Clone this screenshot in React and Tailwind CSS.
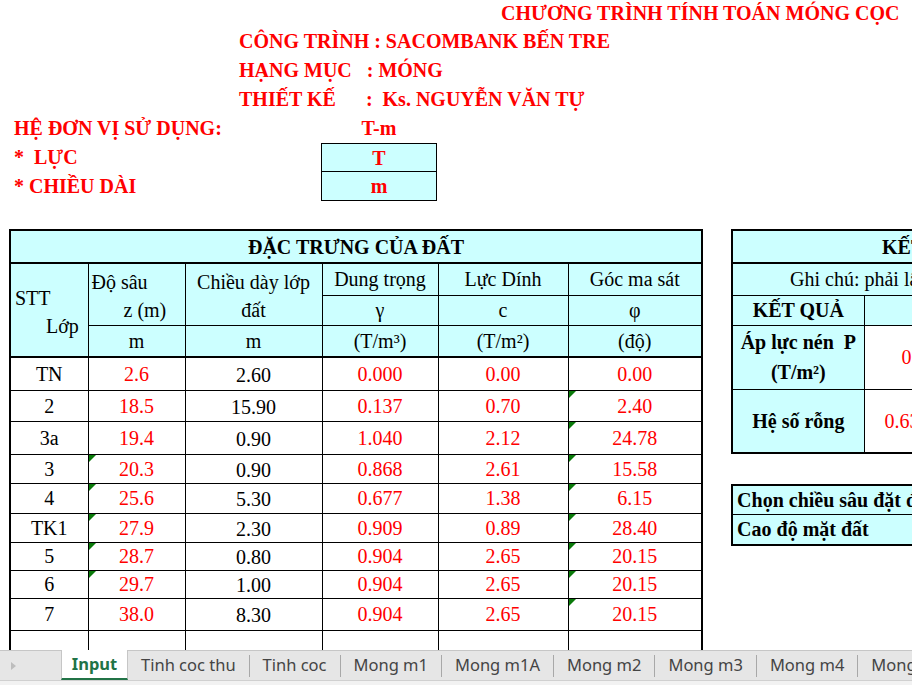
import React from 'react';

const RED = 'text-[#ff0000]';

const soilRows = [
  { stt: 'TN', z: '2.6', d: '2.60', g: '0.000', c: '0.00', phi: '0.00', h: 'h-[33px]', zt: false, pt: false },
  { stt: '2', z: '18.5', d: '15.90', g: '0.137', c: '0.70', phi: '2.40', h: 'h-[31px]', zt: false, pt: true },
  { stt: '3a', z: '19.4', d: '0.90', g: '1.040', c: '2.12', phi: '24.78', h: 'h-[33px]', zt: false, pt: true },
  { stt: '3', z: '20.3', d: '0.90', g: '0.868', c: '2.61', phi: '15.58', h: 'h-[29px]', zt: true, pt: true },
  { stt: '4', z: '25.6', d: '5.30', g: '0.677', c: '1.38', phi: '6.15', h: 'h-[30px]', zt: true, pt: true },
  { stt: 'TK1', z: '27.9', d: '2.30', g: '0.909', c: '0.89', phi: '28.40', h: 'h-[29px]', zt: true, pt: true },
  { stt: '5', z: '28.7', d: '0.80', g: '0.904', c: '2.65', phi: '20.15', h: 'h-[28px]', zt: true, pt: true },
  { stt: '6', z: '29.7', d: '1.00', g: '0.904', c: '2.65', phi: '20.15', h: 'h-[28px]', zt: true, pt: true },
  { stt: '7', z: '38.0', d: '8.30', g: '0.904', c: '2.65', phi: '20.15', h: 'h-[32px]', zt: false, pt: true },
];

const tabs = ['Tinh coc thu', 'Tinh coc', 'Mong m1', 'Mong m1A', 'Mong m2', 'Mong m3', 'Mong m4', 'Mong m5'];

// little green comment marker in the corner of a cell
const Marker = () => (
  <span className="absolute left-0 top-0 w-0 h-0 border-t-[7px] border-r-[7px] border-t-[#0a7a0a] border-r-transparent" />
);

const SoilTable = () => {
  const cell = 'border border-black p-0 text-center';
  const head = `${cell} bg-[#ccffff]`;
  return (
    <table className="border-collapse table-fixed w-[692px] border-2 border-black text-[20px] leading-[28px]">
      <colgroup>
        <col className="w-[78px]" />
        <col className="w-[97px]" />
        <col className="w-[137px]" />
        <col className="w-[116px]" />
        <col className="w-[130px]" />
        <col className="w-[134px]" />
      </colgroup>
      <tbody>
        <tr className="h-[33px]">
          <td colSpan={6} className={`${head} border-b-2 font-bold`}>ĐẶC TRƯNG CỦA ĐẤT</td>
        </tr>
        <tr className="h-[32px]">
          <td rowSpan={3} className={`${head} border-b-2 align-top text-left`}>
            <div className="pt-[20px] pl-[4px]">STT</div>
            <div className="pl-[35px]">Lớp</div>
          </td>
          <td rowSpan={2} className={`${head} align-top text-left`}>
            <div className="pt-[4px] pl-[3px]">Độ sâu</div>
            <div className="pl-[35px]">z (m)</div>
          </td>
          <td rowSpan={2} className={`${head} align-top`}>
            <div className="pt-[4px]">Chiều dày lớp</div>
            <div>đất</div>
          </td>
          <td className={head}>Dung trọng</td>
          <td className={head}>Lực Dính</td>
          <td className={head}>Góc ma sát</td>
        </tr>
        <tr className="h-[30px]">
          <td className={head}>γ</td>
          <td className={head}>c</td>
          <td className={head}>φ</td>
        </tr>
        <tr className="h-[32px]">
          <td className={`${head} border-b-2`}>m</td>
          <td className={`${head} border-b-2`}>m</td>
          <td className={`${head} border-b-2`}>(T/m³)</td>
          <td className={`${head} border-b-2`}>(T/m²)</td>
          <td className={`${head} border-b-2`}>(độ)</td>
        </tr>
        {soilRows.map((r) => (
          <tr key={r.stt} className={`${r.h} leading-[22px]`}>
            <td className={cell}>{r.stt}</td>
            <td className={`${cell} relative ${RED}`}>
              {r.zt && <Marker />}
              {r.z}
            </td>
            <td className={`${cell} pt-[2px]`}>{r.d}</td>
            <td className={`${cell} ${RED}`}>{r.g}</td>
            <td className={`${cell} ${RED}`}>{r.c}</td>
            <td className={`${cell} relative ${RED}`}>
              {r.pt && <Marker />}
              {r.phi}
            </td>
          </tr>
        ))}
        <tr className="h-[40px]">
          <td className={cell} />
          <td className={cell} />
          <td className={cell} />
          <td className={cell} />
          <td className={cell} />
          <td className={cell} />
        </tr>
      </tbody>
    </table>
  );
};

const ResultPanel = () => {
  const cell = 'border border-black p-0';
  const head = `${cell} bg-[#ccffff]`;
  return (
    <div className="shrink-0 ml-[28px] flex flex-col text-[20px] leading-[28px]">
      <table className="border-collapse table-fixed w-[432px] border-2 border-black">
        <colgroup>
          <col className="w-[132px]" />
          <col className="w-[300px]" />
        </colgroup>
        <tbody>
          <tr className="h-[33px]">
            <td colSpan={2} className={`${head} border-b-2 font-bold text-left pl-[149px]`}>KẾT QUẢ TÍNH LÚN</td>
          </tr>
          <tr className="h-[32px]">
            <td colSpan={2} className={`${head} text-left pl-[57px] whitespace-nowrap`}>Ghi chú: phải lấy đúng lớp đất</td>
          </tr>
          <tr className="h-[30px]">
            <td className={`${head} font-bold text-center`}>KẾT QUẢ</td>
            <td className={`${head}`} />
          </tr>
          <tr className="h-[64px]">
            <td className={`${head} font-bold text-center leading-[30px]`}>
              <div className="whitespace-pre">Áp lực nén  P</div>
              <div>(T/m²)</div>
            </td>
            <td className={`${cell} ${RED} text-left pl-[37px]`}>0.85</td>
          </tr>
          <tr className="h-[64px]">
            <td className={`${head} font-bold text-center`}>Hệ số rỗng</td>
            <td className={`${cell} ${RED} text-left pl-[20px]`}>0.6312</td>
          </tr>
        </tbody>
      </table>
      <table className="mt-[30px] border-collapse table-fixed w-[432px] border-2 border-black">
        <tbody>
          <tr className="h-[29px]">
            <td className={`${head} font-bold text-left pl-[4px] whitespace-nowrap`}>Chọn chiều sâu đặt đài cọc</td>
          </tr>
          <tr className="h-[30px]">
            <td className={`${head} font-bold text-left pl-[4px] whitespace-nowrap`}>Cao độ mặt đất</td>
          </tr>
        </tbody>
      </table>
    </div>
  );
};

const SheetTabs = () => (
  <div className="h-[35px] shrink-0 flex flex-col bg-[#e6e6e6] border-t border-[#c6c6c6] font-['Segoe_UI','Noto_Sans',sans-serif] text-[16.5px] text-[#444]">
    <div className="h-[29px] flex items-stretch">
      <div className="w-[61px] shrink-0 flex items-center pl-[10px]">
        <svg width="7" height="10" viewBox="0 0 7 10">
          <path d="M1 1 L6 5 L1 9 Z" fill="#bdbdbd" />
        </svg>
      </div>
      <div className="w-[67px] shrink-0 -mt-px bg-white border-x border-[#c6c6c6] border-b-2 border-b-[#217346] flex items-center justify-center font-bold text-[#217346]">
        Input
      </div>
      {tabs.map((t, i) => (
        <div key={t} className="flex items-center shrink-0">
          <div className="px-[13px] whitespace-nowrap">{t}</div>
          {i < tabs.length - 1 && <span className="w-px h-[22px] bg-[#a8a8a8]" />}
        </div>
      ))}
    </div>
    <div className="flex-1 bg-[#f2f2f2] border-t border-[#d0d0d0]" />
  </div>
);

export default function App() {
  return (
    <div className="w-[912px] h-[685px] overflow-hidden bg-white flex flex-col font-['Liberation_Serif','Times_New_Roman',serif] text-black">
      <div className="h-[650px] overflow-hidden shrink-0">
        {/* title block */}
        <div className="font-bold text-[20px] text-[#ff0000] leading-[29px]">
          <div className="h-[27px] leading-[27px] pl-[501px] whitespace-nowrap">CHƯƠNG TRÌNH TÍNH TOÁN MÓNG CỌC</div>
          <div className="h-[29px] pl-[239px] whitespace-nowrap">CÔNG TRÌNH : SACOMBANK BẾN TRE</div>
          <div className="h-[29px] pl-[239px] whitespace-pre">HẠNG MỤC   : MÓNG</div>
          <div className="h-[29px] pl-[239px] whitespace-pre">THIẾT KẾ      :  Ks. NGUYỄN VĂN TỰ</div>
          <div className="h-[29px] flex">
            <div className="w-[321px] pl-[14px] whitespace-nowrap">HỆ ĐƠN VỊ SỬ DỤNG:</div>
            <div className="w-[116px] text-center">T-m</div>
          </div>
          <div className="h-[29px] flex">
            <div className="w-[321px] pl-[14px] whitespace-pre">*  LỰC</div>
            <div className="w-[116px] text-center bg-[#ccffff] border border-black">T</div>
          </div>
          <div className="h-[29px] flex">
            <div className="w-[321px] pl-[14px] whitespace-pre">* CHIỀU DÀI</div>
            <div className="w-[116px] text-center bg-[#ccffff] border border-t-0 border-black">m</div>
          </div>
          <div className="h-[28px]" />
        </div>

        <div className="flex items-start pl-[9px]">
          <SoilTable />
          <ResultPanel />
        </div>
      </div>
      <SheetTabs />
    </div>
  );
}
